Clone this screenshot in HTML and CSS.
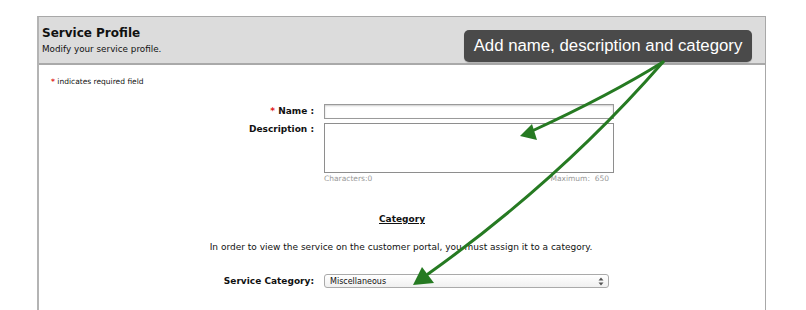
FILE: index.html
```html
<!DOCTYPE html>
<html>
<head>
<meta charset="utf-8">
<link rel="stylesheet" href="styles.css">
</head>
<body>
<div class="panel">
  <div class="header">
    <h1 class="title">Service Profile</h1>
    <p class="subtitle">Modify your service profile.</p>
  </div>
  <div class="content">
    <p class="req"><span class="star">*</span> indicates required field</p>
    <div class="form">
      <label class="lbl"><span class="star">*</span> Name :</label>
      <div class="field"><div class="input"></div></div>
      <label class="lbl lbl-desc">Description :</label>
      <div class="field">
        <div class="textarea"></div>
        <div class="counter"><span>Characters:0</span><span>Maximum:&nbsp; 650</span></div>
      </div>
    </div>
    <h2 class="cat">Category</h2>
    <p class="info">In order to view the service on the customer portal, you must assign it to a category.</p>
    <div class="form form-sel">
      <label class="lbl">Service Category:</label>
      <div class="field">
        <div class="select"><span>Miscellaneous</span>
          <svg class="updown" width="6" height="9" viewBox="0 0 6 9"><path d="M3 0.5 L5.5 3.5 L0.5 3.5 Z M3 8.5 L5.5 5.5 L0.5 5.5 Z" fill="#555"/></svg>
        </div>
      </div>
    </div>
  </div>
</div>
<div class="tip">Add name, description and category</div>
<svg class="arrows" width="806" height="310" viewBox="0 0 806 310">
  <g fill="none" stroke="#267a22" stroke-width="3" stroke-linecap="round">
    <path d="M663 62 Q 610 95 532 131"/>
    <path d="M663 62 Q 560 180 428 274"/>
  </g>
  <g fill="#267a22">
    <polygon points="520,136 532,124 537,140"/>
    <polygon points="413,285 422,267 434,283"/>
  </g>
</svg>
</body>
</html>
```
FILE: styles.css
```css
html, body {
  margin: 0;
  padding: 0;
  background: #fff;
}
body {
  width: 806px;
  height: 310px;
  overflow: hidden;
  position: relative;
  font-family: "DejaVu Sans", Verdana, sans-serif;
  color: #111;
}
.panel {
  margin: 16px 0 0 37px;
  width: 729px;
  height: 294px;
  box-sizing: border-box;
  border: 1px solid #a8a8a8;
  border-left: 2px solid #b4b4b4;
  border-bottom: none;
}
.header {
  background: #dcdcdc;
  border-bottom: 2px solid #a9a9a9;
  padding: 8px 3px 0;
  height: 38px;
}
.title {
  margin: 0;
  font-size: 12px;
  font-weight: bold;
  line-height: 17px;
}
.subtitle {
  margin: 1px 0 0;
  font-size: 8.8px;
  line-height: 13px;
}
.content {
  padding-top: 12px;
}
.req {
  margin: 0 0 0 12px;
  font-size: 7.5px;
  line-height: 10px;
}
.star {
  color: #e0201c;
  font-weight: bold;
}
.form {
  display: grid;
  grid-template-columns: 275px 290px;
  column-gap: 10px;
  row-gap: 4px;
  margin-top: 17px;
  align-items: start;
}
.lbl {
  text-align: right;
  font-size: 9px;
  font-weight: bold;
  line-height: 15px;
}
.lbl-desc {
  line-height: 13px;
}
.input {
  height: 13px;
  border: 1px solid #9a9a9a;
  box-shadow: inset 0 1px 2px #ccc;
  background: #fff;
}
.textarea {
  height: 48px;
  border: 1px solid #8e8e8e;
  background: #fff;
}
.counter {
  display: flex;
  justify-content: space-between;
  font-size: 7.5px;
  line-height: 10px;
  color: #999;
  padding-right: 5px;
  margin-top: 1px;
}
.cat {
  margin: 29px 0 0;
  text-align: center;
  font-size: 9px;
  font-weight: bold;
  text-decoration: underline;
  line-height: 13px;
}
.info {
  margin: 15px 0 0;
  text-align: center;
  font-size: 9px;
  line-height: 13px;
  padding-right: 2px;
}
.form-sel {
  grid-template-columns: 275px 285px;
  margin-top: 20px;
}
.select {
  height: 12px;
  border: 1px solid #aaa;
  border-radius: 3px;
  background: linear-gradient(#fff, #f0f0f0);
  display: flex;
  align-items: center;
  justify-content: space-between;
  padding: 0 4px 0 5px;
  font-size: 8px;
  color: #111;
}
.updown {
  display: block;
}
.tip {
  position: absolute;
  left: 464px;
  top: 30px;
  width: 288px;
  height: 32px;
  box-sizing: border-box;
  background: #4a4a4a;
  border-radius: 5px;
  color: #fff;
  font-family: "Liberation Sans", Arial, sans-serif;
  font-size: 16.8px;
  line-height: 32px;
  text-align: center;
  box-shadow: 0 1px 1px rgba(0,0,0,0.2);
}
.arrows {
  position: absolute;
  left: 0;
  top: 0;
  pointer-events: none;
}
```
